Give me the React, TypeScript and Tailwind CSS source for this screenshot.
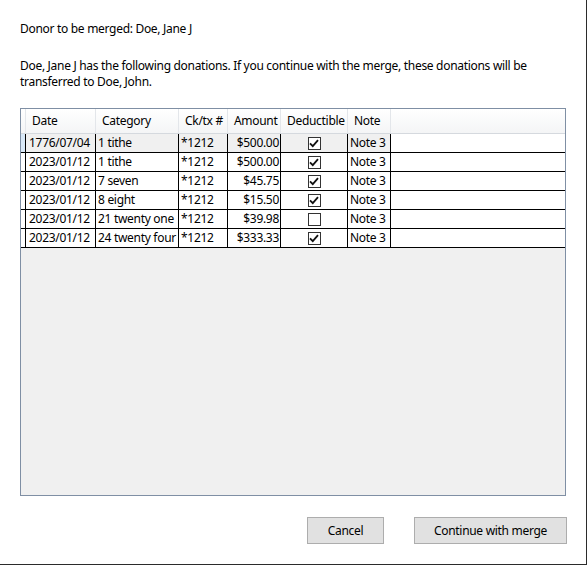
import React from "react";

type Donation = {
  date: string;
  category: string;
  check: string;
  amount: string;
  deductible: boolean;
  note: string;
};

const donations: Donation[] = [
  { date: "1776/07/04", category: "1 tithe", check: "*1212", amount: "$500.00", deductible: true, note: "Note 3" },
  { date: "2023/01/12", category: "1 tithe", check: "*1212", amount: "$500.00", deductible: true, note: "Note 3" },
  { date: "2023/01/12", category: "7 seven", check: "*1212", amount: "$45.75", deductible: true, note: "Note 3" },
  { date: "2023/01/12", category: "8 eight", check: "*1212", amount: "$15.50", deductible: true, note: "Note 3" },
  { date: "2023/01/12", category: "21 twenty one", check: "*1212", amount: "$39.98", deductible: false, note: "Note 3" },
  { date: "2023/01/12", category: "24 twenty four", check: "*1212", amount: "$333.33", deductible: true, note: "Note 3" },
];

function CheckBox({ checked }: { checked: boolean }) {
  return (
    <span className="flex h-[13px] w-[13px] items-center justify-center border border-[#333333] bg-white">
      {checked && (
        <svg width="10" height="9" viewBox="0 0 10 9" fill="none">
          <path d="M1 4.3 L3.8 7.2 L9 1.2" stroke="#111" strokeWidth="1.8" />
        </svg>
      )}
    </span>
  );
}

// header cell
function Head({ w, children }: { w: string; children?: React.ReactNode }) {
  return (
    <div className={`${w} flex h-full shrink-0 items-center border-r border-[#e3e6ea] pl-[6px]`}>
      {children}
    </div>
  );
}

export default function App() {
  return (
    <div
      className="h-[566px] w-[588px] bg-white text-[12px] tracking-[-0.3px] text-black"
      style={{ fontFamily: '"Noto Sans", "Open Sans", sans-serif' }}
    >
      <div className="flex h-[565px] w-[587px] flex-col border-b border-r border-[#2b2b2b] pl-[20px] pr-[19px]">
        <p className="mt-[21px] leading-[16px]">Donor to be merged: Doe, Jane J</p>
        <p className="mt-[21px] leading-[16px]">
          Doe, Jane J has the following donations. If you continue with the merge, these donations will be
          transferred to Doe, John.
        </p>

        {/* Data grid */}
        <div className="mr-[1px] mt-[18px] flex h-[388px] flex-col border border-[#7f8fa4] bg-[#f0f0f0]">
          <div className="flex h-[25px] shrink-0 items-stretch border-b border-[#d5d9de] bg-gradient-to-b from-white to-[#f4f5f6]">
            <Head w="w-[5px] !pl-0" />
            <Head w="w-[70px]">Date</Head>
            <Head w="w-[83px]">Category</Head>
            <Head w="w-[49px]">Ck/tx #</Head>
            <Head w="w-[53px]">Amount</Head>
            <Head w="w-[67px]">Deductible</Head>
            <Head w="w-[43px]">Note</Head>
            <div className="flex-1" />
          </div>

          {donations.map((d, i) => (
            <div
              key={i}
              className={`flex h-[19px] shrink-0 border-b border-black ${i === 0 ? "bg-[#f0f0f0]" : "bg-white"}`}
            >
              <div className={`w-[5px] shrink-0 border-r border-black ${i === 0 ? "bg-[#d8e8f7]" : "bg-white"}`} />
              <div className="flex w-[70px] shrink-0 items-center overflow-hidden whitespace-nowrap border-r border-black pl-[3px]">
                {d.date}
              </div>
              <div className="flex w-[83px] shrink-0 items-center overflow-hidden whitespace-nowrap border-r border-black pl-[2px]">
                {d.category}
              </div>
              <div className="flex w-[49px] shrink-0 items-center overflow-hidden whitespace-nowrap border-r border-black pl-[2px]">
                {d.check}
              </div>
              <div className="flex w-[53px] shrink-0 items-center justify-end overflow-hidden whitespace-nowrap border-r border-black pr-[1px]">
                {d.amount}
              </div>
              <div className="flex w-[67px] shrink-0 items-center justify-center border-r border-black">
                <CheckBox checked={d.deductible} />
              </div>
              <div className="flex w-[43px] shrink-0 items-center overflow-hidden whitespace-nowrap border-r border-black pl-[2px]">
                {d.note}
              </div>
              <div className="flex-1 bg-white" />
            </div>
          ))}
        </div>

        <div className="mt-[21px] flex justify-end gap-[30px]">
          <button
            type="button"
            className="h-[27px] w-[77px] border border-[#adadad] bg-[#e1e1e1] leading-none"
          >
            Cancel
          </button>
          <button
            type="button"
            className="h-[27px] w-[153px] border border-[#adadad] bg-[#e1e1e1] leading-none"
          >
            Continue with merge
          </button>
        </div>
      </div>
    </div>
  );
}
